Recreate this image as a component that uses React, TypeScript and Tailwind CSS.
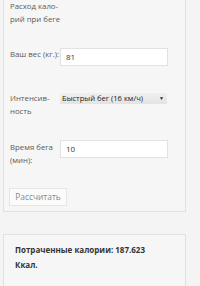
import React from "react";

// ── Calorie calculator (running) ──────────────────────────────────────────────

const font = { fontFamily: '"Open Sans", "Noto Sans", sans-serif' };

function Label({ children }: { children: React.ReactNode }) {
  return (
    <div className="w-[50px] shrink-0 whitespace-nowrap text-[7.8px] leading-[13px] text-[#5a5a5a]">
      {children}
    </div>
  );
}

export default function App() {
  return (
    <div
      className="h-[286px] w-[200px] overflow-hidden bg-[#f4f4f4]"
      style={font}
    >
      {/* Form box — top edge scrolled out of view */}
      <div className="ml-[3px] w-[183px] border-x border-b border-[#e0e0e0] bg-[#f6f6f6] pl-[6px] pb-[5px]">
        <div className="whitespace-nowrap text-[7.8px] leading-[13px] text-[#5a5a5a]">
          Расход кало-
          <br />
          рий при беге
        </div>

        <div className="mt-[22px] flex items-start">
          <Label>Ваш вес (кг.):</Label>
          <div className="flex h-[18px] w-[108px] items-center border border-[#e2e2e2] bg-white pl-[5px] text-[8px] text-[#333]">
            81
          </div>
        </div>

        <div className="mt-[26px] flex items-start">
          <Label>
            Интенсив-
            <br />
            ность
          </Label>
          <div className="mt-[1px] flex h-[11px] w-[107px] items-center justify-between whitespace-nowrap rounded-[1px] bg-gradient-to-b from-[#f0f0f0] to-[#e3e3e3] pl-[2px] pr-[3px] text-[7.6px] text-[#222]">
            <span>Быстрый бег (16 км/ч)</span>
            <span className="text-[5px]">▼</span>
          </div>
        </div>

        <div className="mt-[22px] flex items-start">
          <Label>
            <div className="pt-[1px]">
              Время бега
              <br />
              (мин):
            </div>
          </Label>
          <div className="flex h-[18px] w-[108px] items-center border border-[#e2e2e2] bg-white pl-[5px] text-[8px] text-[#333]">
            10
          </div>
        </div>

        <button className="ml-[-1px] mt-[21px] h-[18px] w-[58px] whitespace-nowrap border border-[#e6e6e6] bg-[#fbfbfb] text-[8.4px] text-[#888]">
          Рассчитать
        </button>
      </div>

      {/* Result box */}
      <div className="ml-[3px] mt-[22px] h-[70px] w-[183px] border border-[#e0e0e0] bg-[#f6f6f6] pl-[11px] pt-[7px]">
        <p className="whitespace-nowrap text-[8px] font-bold leading-[15px] text-[#333]">
          Потраченные калории: 187.623
          <br />
          Ккал.
        </p>
      </div>
    </div>
  );
}
